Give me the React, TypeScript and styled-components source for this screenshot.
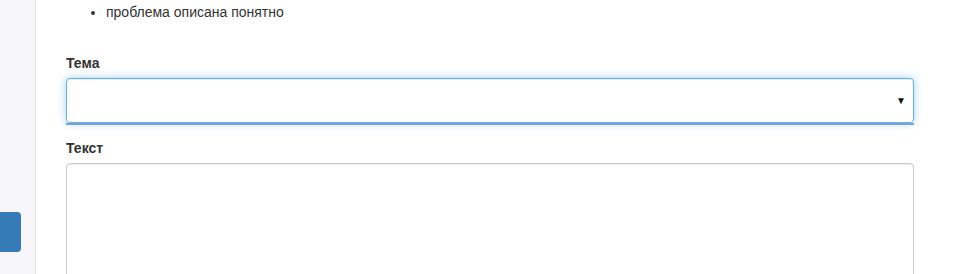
import React from "react";
import styled, { createGlobalStyle } from "styled-components";

const Global = createGlobalStyle`
  html, body { margin: 0; padding: 0; background: #fff; }
  body {
    font-family: "Liberation Sans", Arial, Helvetica, sans-serif;
    font-size: 14px;
    line-height: 20px;
    color: #333;
    overflow: hidden;
  }
`;

const Page = styled.div`
  display: flex;
  height: 274px;
  overflow: hidden;
`;

const Sidebar = styled.aside`
  width: 35px;
  flex: none;
  background: #f6f6f8;
  border-right: 1px solid #e2e2e6;
  display: flex;
  flex-direction: column;
`;

const SideTab = styled.div`
  margin-top: 212px;
  width: 21px;
  height: 40px;
  background: #337ab7;
  border-radius: 0 4px 4px 0;
`;

const Main = styled.main`
  flex: 1;
  padding: 0 59px 0 30px;
  margin-top: -18px;
`;

const List = styled.ul`
  margin: 0 0 31px;
  padding-left: 40px;
`;

const Label = styled.label`
  display: block;
  font-weight: bold;
  font-size: 14px;
  margin-bottom: 5px;
`;

const SelectWrap = styled.div`
  position: relative;
  margin-bottom: 13px;
`;

const Select = styled.div`
  height: 45px;
  box-sizing: border-box;
  border: 1px solid #66afe9;
  border-radius: 4px;
  background: #fff;
  box-shadow: inset 0 1px 1px rgba(0, 0, 0, 0.075), 0 0 8px rgba(102, 175, 233, 0.6);
  display: flex;
  align-items: center;
  justify-content: flex-end;
  padding-right: 7px;
`;

const Arrow = styled.span`
  font-size: 10px;
  color: #111;
  line-height: 1;
`;

const Underline = styled.div`
  height: 2px;
  background: #789fd7;
`;

const TextArea = styled.div`
  height: 140px;
  box-sizing: border-box;
  border: 1px solid #ccc;
  border-radius: 4px;
  background: #fff;
  box-shadow: inset 0 1px 1px rgba(0, 0, 0, 0.075);
`;

export default function App() {
  return (
    <>
      <Global />
      <Page>
        <Sidebar>
          <SideTab />
        </Sidebar>
        <Main>
          <List>
            <li>сообщение оформлено грамотно и корректно</li>
            <li>проблема описана понятно</li>
          </List>
          <Label>Тема</Label>
          <SelectWrap>
            <Select>
              <Arrow>▼</Arrow>
            </Select>
            <Underline />
          </SelectWrap>
          <Label>Текст</Label>
          <TextArea />
        </Main>
      </Page>
    </>
  );
}
